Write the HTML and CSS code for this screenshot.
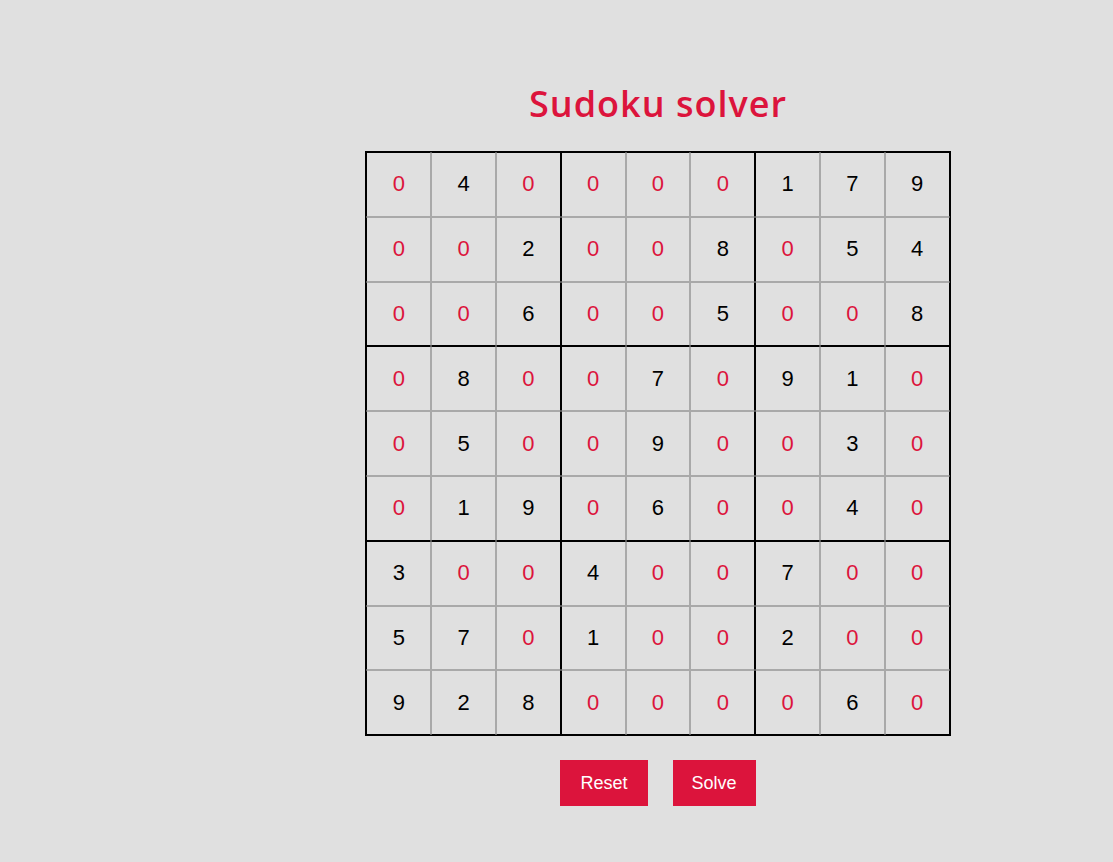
FILE: index.html
```html
<!DOCTYPE html>
<html>
<head>
<meta charset="utf-8">
<link rel="stylesheet" href="styles.css">
</head>
<body>
<main class="app">
  <h1 class="title">Sudoku solver</h1>
  <div class="board" id="board"></div>
  <div class="actions">
    <button class="btn btn-reset">Reset</button>
    <button class="btn btn-solve">Solve</button>
  </div>
</main>
<script src="app.js"></script>
</body>
</html>
```
FILE: app.js
```js
const data = [
  [0,4,0,0,0,0,1,7,9],
  [0,0,2,0,0,8,0,5,4],
  [0,0,6,0,0,5,0,0,8],
  [0,8,0,0,7,0,9,1,0],
  [0,5,0,0,9,0,0,3,0],
  [0,1,9,0,6,0,0,4,0],
  [3,0,0,4,0,0,7,0,0],
  [5,7,0,1,0,0,2,0,0],
  [9,2,8,0,0,0,0,6,0]
];
const board = document.getElementById('board');
data.forEach((row, r) => {
  row.forEach((v, c) => {
    const cell = document.createElement('div');
    cell.className = 'cell';
    if (v === 0) cell.classList.add('empty');
    if (c === 0 || c === 3 || c === 6) cell.classList.add('bl');
    if (c === 2 || c === 5 || c === 8) cell.classList.add('br');
    if (r === 0 || r === 3 || r === 6) cell.classList.add('bt');
    if (r === 2 || r === 5 || r === 8) cell.classList.add('bb');
    cell.textContent = v;
    board.appendChild(cell);
  });
});
```
FILE: styles.css
```css
html, body {
  margin: 0;
  padding: 0;
  background: #e0e0e0;
}
body {
  font-family: "Liberation Sans", Arial, sans-serif;
}
.app {
  display: flex;
  flex-direction: column;
  align-items: center;
  padding-top: 77px;
  padding-left: 203px;
}
.title {
  margin: 0 0 20px;
  font-family: "Open Sans", "Noto Sans", sans-serif;
  font-weight: 600;
  font-size: 36px;
  line-height: 54px;
  color: #dc143c;
  letter-spacing: 1px;
}
.board {
  display: grid;
  grid-template-columns: repeat(9, 64.8px);
  grid-auto-rows: 64.8px;
  border: 1px solid #000;
}
.cell {
  box-sizing: border-box;
  border: 1px solid #a9a9a9;
  display: flex;
  align-items: center;
  justify-content: center;
  font-size: 22px;
  color: #000;
}
.cell.empty { color: #dc143c; }
.cell.bl { border-left-color: #000; }
.cell.br { border-right-color: #000; }
.cell.bt { border-top-color: #000; }
.cell.bb { border-bottom-color: #000; }
.actions {
  display: flex;
  gap: 25px;
  margin-top: 24px;
}
.btn {
  background: #dc143c;
  color: #fff;
  border: none;
  font-family: "Liberation Sans", Arial, sans-serif;
  font-size: 18px;
  line-height: 22px;
  padding: 12px 20px;
}
.btn-solve { padding: 12px 19px; }
```
